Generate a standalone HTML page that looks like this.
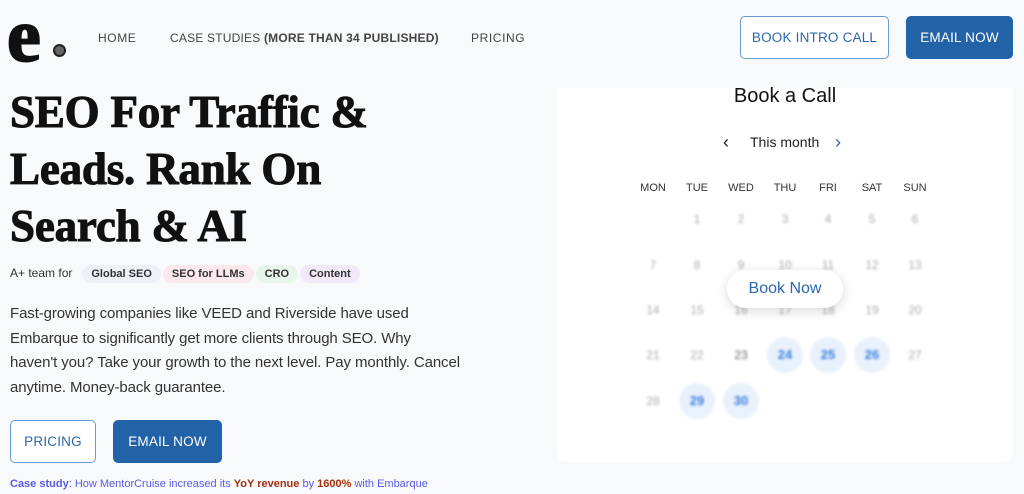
<!DOCTYPE html>
<html><head><meta charset="utf-8"><style>
*{margin:0;padding:0;box-sizing:border-box}
body{width:1024px;height:494px;background:#f8f9fb;font-family:"Liberation Sans",sans-serif;position:relative;overflow:hidden;color:#222}
.a{position:absolute}
.nav{font-size:12px;letter-spacing:.6px;color:#444;top:31px;white-space:nowrap}
.btn{position:absolute;border-radius:5px;font-size:13.5px;letter-spacing:.2px;display:flex;align-items:center;justify-content:center}
.o{border:1px solid #6a9ad2;background:#fff;color:#2c66ad}
.f{background:#2263a7;color:#fff}
h1{position:absolute;left:10px;top:84px;font-family:"Liberation Serif",serif;font-weight:900;font-size:45px;line-height:57px;color:#111;letter-spacing:-.2px;-webkit-text-stroke:1px #111;white-space:nowrap}
.tag{display:inline-block;padding:3px 9px;border-radius:11px;font-weight:bold;font-size:11px;color:#333;margin-right:2px}
.card{left:557px;top:88px;width:456px;height:374px;background:#fff;border-radius:0 0 10px 10px}
.d{position:absolute;width:30px;text-align:center;font-size:12px;color:#aaa;filter:blur(1.2px)}
.dh{position:absolute;width:40px;text-align:center;font-size:11px;color:#333}
.b{color:#3a7ee0;font-weight:bold;background:#e9f1fc;border-radius:50%;width:36px;height:36px;line-height:36px;font-size:13px}
</style></head><body>
<div class="a" style="left:7px;top:-2px;font-family:'Liberation Serif',serif;font-size:76px;font-weight:bold;line-height:76px;color:#111;-webkit-text-stroke:2px #111">e</div>
<div class="a" style="left:53px;top:44px;width:13px;height:13px;border-radius:50%;background:#666;border:2px solid #222"></div>
<div class="a nav" style="left:98px">HOME</div>
<div class="a nav" style="left:170px;letter-spacing:.2px">CASE STUDIES <b>(MORE THAN 34 PUBLISHED)</b></div>
<div class="a nav" style="left:471px">PRICING</div>
<div class="btn o" style="left:740px;top:16px;width:149px;height:43px">BOOK INTRO CALL</div>
<div class="btn f" style="left:906px;top:16px;width:107px;height:43px">EMAIL NOW</div>
<h1>SEO For Traffic &amp;<br>Leads. Rank On<br>Search &amp; AI</h1>
<div class="a" style="left:10px;top:265px;font-size:12px;color:#333">A+ team for &nbsp; <span class="tag" style="background:#eef0f5">Global SEO</span><span class="tag" style="background:#fbe8ec">SEO for LLMs</span><span class="tag" style="background:#e8f5ea">CRO</span><span class="tag" style="background:#f1e9f9">Content</span></div>
<div class="a" style="left:10px;top:302px;font-size:15px;line-height:24.5px;color:#333;letter-spacing:-.1px;white-space:nowrap">Fast-growing companies like VEED and Riverside have used<br>Embarque to significantly get more clients through SEO. Why<br>haven't you? Take your growth to the next level. Pay monthly. Cancel<br>anytime. Money-back guarantee.</div>
<div class="btn o" style="left:10px;top:420px;width:86px;height:43px">PRICING</div>
<div class="btn f" style="left:113px;top:420px;width:109px;height:43px">EMAIL NOW</div>
<div class="a" style="left:10px;top:478px;font-size:11px;color:#5a5ae0;white-space:nowrap"><b>Case study</b>: How MentorCruise increased its <b style="color:#a33010">YoY revenue</b> by <b style="color:#a33010">1600%</b> with Embarque</div>
<div class="a card">
<div class="a" style="left:0;width:456px;top:-3px;text-align:center;font-size:20px;color:#111">Book a Call</div>
<div class="a" style="left:166px;top:44px;font-size:18px;color:#222">‹</div>
<div class="a" style="left:193px;top:46px;font-size:14px;color:#222">This month</div>
<div class="a" style="left:278px;top:44px;font-size:18px;color:#2c66ad">›</div>
<div class="dh" style="left:76px;top:94px">MON</div><div class="dh" style="left:120px;top:94px">TUE</div><div class="dh" style="left:164px;top:94px">WED</div><div class="dh" style="left:208px;top:94px">THU</div><div class="dh" style="left:251px;top:94px">FRI</div><div class="dh" style="left:295px;top:94px">SAT</div><div class="dh" style="left:338px;top:94px">SUN</div>
<div class="d" style="left:125px;top:124px">1</div><div class="d" style="left:169px;top:124px">2</div><div class="d" style="left:213px;top:124px">3</div><div class="d" style="left:256px;top:124px">4</div><div class="d" style="left:300px;top:124px">5</div><div class="d" style="left:343px;top:124px">6</div>
<div class="d" style="left:81px;top:170px">7</div><div class="d" style="left:125px;top:170px">8</div><div class="d" style="left:169px;top:170px">9</div><div class="d" style="left:213px;top:170px">10</div><div class="d" style="left:256px;top:170px">11</div><div class="d" style="left:300px;top:170px">12</div><div class="d" style="left:343px;top:170px">13</div>
<div class="d" style="left:81px;top:215px">14</div><div class="d" style="left:125px;top:215px">15</div><div class="d" style="left:169px;top:215px">16</div><div class="d" style="left:213px;top:215px">17</div><div class="d" style="left:256px;top:215px">18</div><div class="d" style="left:300px;top:215px">19</div><div class="d" style="left:343px;top:215px">20</div>
<div class="d" style="left:81px;top:260px">21</div><div class="d" style="left:125px;top:260px">22</div><div class="d" style="left:169px;top:260px;color:#666">23</div>
<div class="d b" style="left:210px;top:249px">24</div><div class="d b" style="left:253px;top:249px">25</div><div class="d b" style="left:297px;top:249px">26</div><div class="d" style="left:343px;top:260px">27</div>
<div class="d" style="left:81px;top:306px">28</div><div class="d b" style="left:122px;top:295px">29</div><div class="d b" style="left:166px;top:295px">30</div>
<div class="a" style="left:170px;top:182px;width:116px;height:38px;border-radius:19px;background:#fff;box-shadow:0 3px 12px rgba(0,0,0,.15);text-align:center;line-height:38px;font-size:16px;color:#2c66ad">Book Now</div>
</div>
</body></html>
